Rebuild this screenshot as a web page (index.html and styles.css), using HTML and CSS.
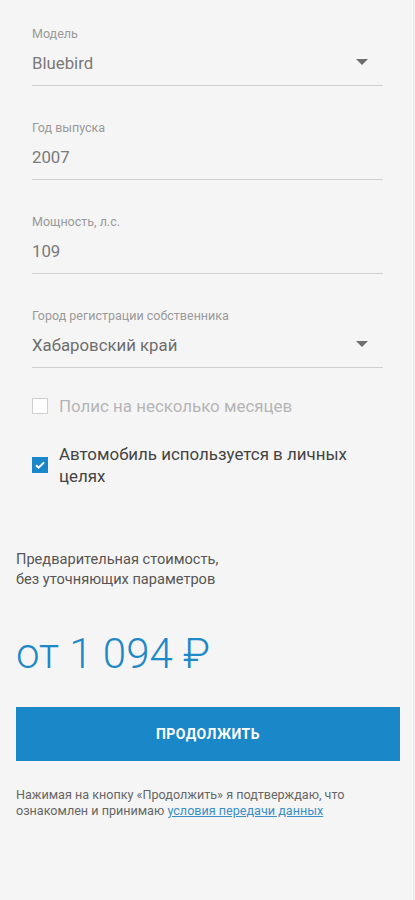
FILE: index.html
```html
<!DOCTYPE html>
<html lang="ru">
<head>
    <meta charset="UTF-8">
    <title>Расчёт ОСАГО</title>
    <link rel="stylesheet" href="styles.css">
</head>
<body>
    <div class="page">
        <div class="form">
            <div class="field select">
                <label>Модель</label>
                <div class="value">Bluebird</div>
            </div>
            <div class="field">
                <label>Год выпуска</label>
                <div class="value">2007</div>
            </div>
            <div class="field">
                <label>Мощность, л.с.</label>
                <div class="value">109</div>
            </div>
            <div class="field select last">
                <label>Город регистрации собственника</label>
                <div class="value dark">Хабаровский край</div>
            </div>

            <div class="check disabled">
                <span class="box"></span>
                <span class="text">Полис на несколько месяцев</span>
            </div>
            <div class="check checked">
                <span class="box">
                    <svg width="12" height="12" viewBox="0 0 12 12"><path d="M2 6.2l2.6 2.5L10 3.4" fill="none" stroke="#fff" stroke-width="2"/></svg>
                </span>
                <span class="text">Автомобиль используется в личных целях</span>
            </div>
        </div>

        <div class="summary">
            <p class="note">Предварительная стоимость,<br>без уточняющих параметров</p>
            <div class="price">от 1 094 ₽</div>
            <button class="continue">ПРОДОЛЖИТЬ</button>
            <p class="terms">Нажимая на кнопку «Продолжить» я подтверждаю, что ознакомлен и принимаю <a href="#">условия передачи данных</a></p>
        </div>
    </div>
</body>
</html>
```

FILE: styles.css
```css
body {
    margin: 0;
    padding: 0;
    background-color: #f5f5f5;
    font-family: Roboto, "Liberation Sans", sans-serif;
}
.page {
    width: 414px;
    min-height: 900px;
    border-right: 1px solid #e6e6e6;
    box-sizing: border-box;
}
.form {
    padding: 27px 30px 0 32px;
}
.field {
    position: relative;
    margin-bottom: 35px;
}
.field.last {
    margin-bottom: 27px;
}
.field label {
    display: block;
    font-size: 12.5px;
    color: #9a9a9a;
    line-height: 14px;
}
.field .value {
    margin-top: 12px;
    font-size: 16.8px;
    line-height: 20px;
    color: #7a7a7a;
    padding-bottom: 12px;
    border-bottom: 1px solid #cfcfcf;
}
.field .value.dark {
    color: #6e6e6e;
}
.field.select .value::after {
    content: "";
    position: absolute;
    right: 15px;
    top: 32px;
    border-left: 6px solid transparent;
    border-right: 6px solid transparent;
    border-top: 6px solid #6e6e6e;
}
.check {
    display: flex;
    align-items: center;
}
.check .box {
    width: 16px;
    height: 16px;
    box-sizing: border-box;
    border: 1px solid #cfcfcf;
    background-color: #fff;
    flex-shrink: 0;
    display: flex;
    align-items: center;
    justify-content: center;
}
.check .text {
    margin-left: 11px;
    font-size: 16.9px;
    line-height: 22px;
    color: #b5b5b5;
}
.check.checked {
    margin-top: 26px;
    padding-right: 18px;
}
.check.checked .box {
    background-color: #1a87c9;
    border-color: #1a87c9;
}
.check.checked .text {
    color: #444;
}
.summary {
    padding: 62px 13px 0 16px;
}
.note {
    margin: 0;
    font-size: 14.6px;
    line-height: 20px;
    color: #555;
}
.price {
    margin-top: 40px;
    font-size: 42px;
    font-weight: 300;
    line-height: 50px;
    color: #1e88c8;
}
button.continue {
    display: block;
    width: 100%;
    height: 54px;
    margin-top: 28px;
    border: none;
    background-color: #1a87c9;
    color: #fff;
    font-family: Roboto, "Liberation Sans", sans-serif;
    font-size: 14px;
    font-weight: bold;
    letter-spacing: 0.5px;
    cursor: pointer;
}
.terms {
    margin: 26px 0 0;
    font-size: 12.6px;
    line-height: 16px;
    color: #666;
}
.terms a {
    color: #3a8fc8;
}
```
